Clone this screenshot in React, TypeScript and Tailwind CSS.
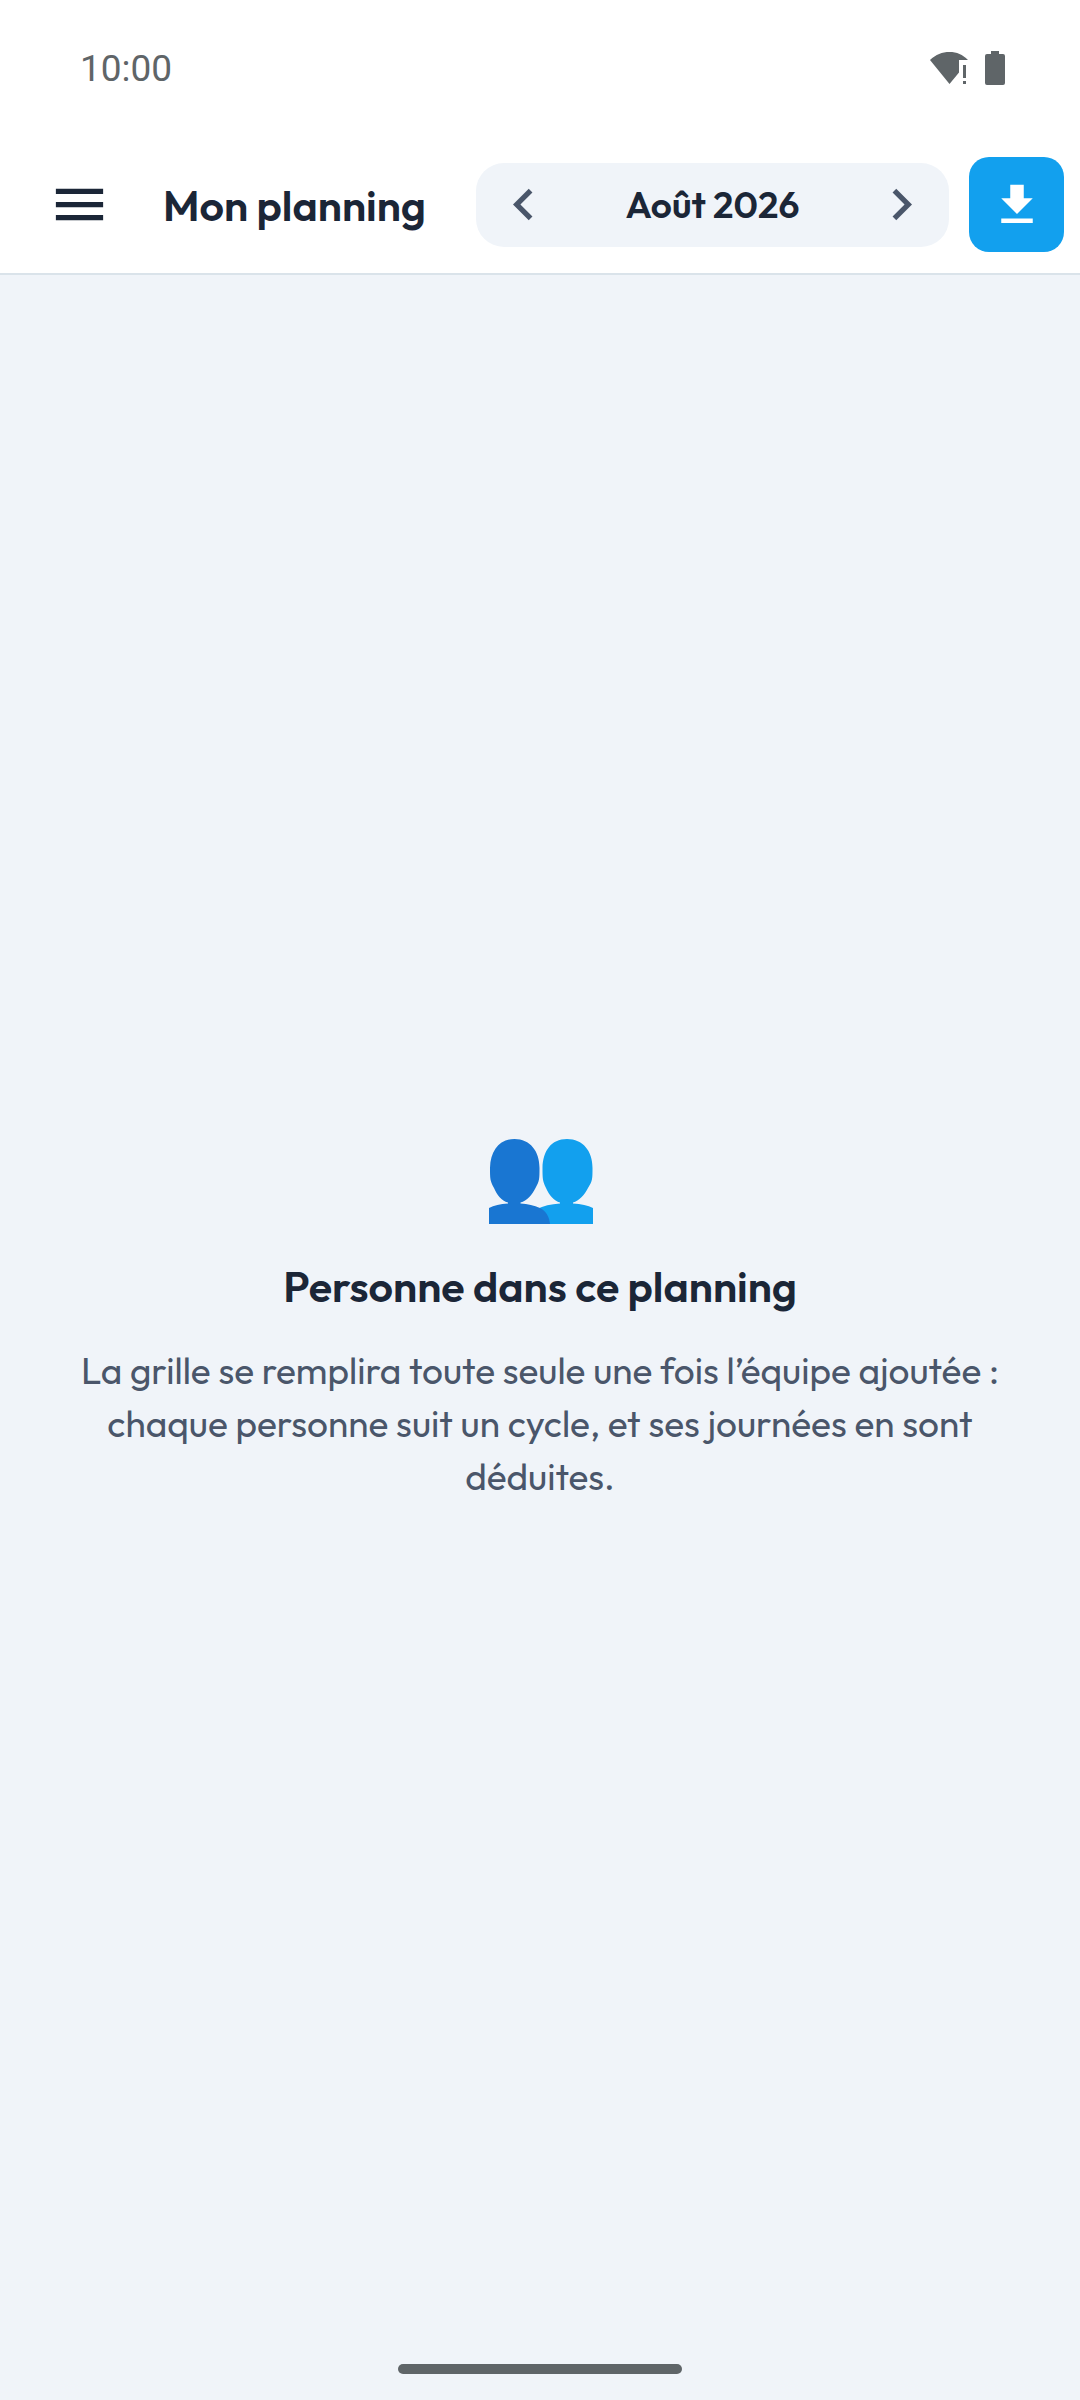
import React, { useState } from 'react';
import { MdChevronLeft, MdChevronRight, MdFileDownload, MdMenu } from 'react-icons/md';

const MONTHS = [
  'Janvier', 'Février', 'Mars', 'Avril', 'Mai', 'Juin',
  'Juillet', 'Août', 'Septembre', 'Octobre', 'Novembre', 'Décembre',
];

const StatusBar: React.FC = () => (
  <div className="flex h-34 items-center justify-between pl-20 pr-[74px] font-['Roboto',sans-serif] text-[#5f6568]">
    <span className="text-[37px] leading-none">10:00</span>
    <div className="flex items-center gap-[15px]">
      <svg width="40" height="36" viewBox="0 1 40 36" fill="currentColor" aria-hidden="true">
        <path d="M1 11C7 5.500 13 3 20.500 3S33.500 5.500 39 11H30V23.500L20.500 35Z" />
        <path d="M34 16h3v13h-3zM34 32h3v3h-3z" />
      </svg>
      <svg width="22" height="36" viewBox="0 1 22 36" fill="currentColor" aria-hidden="true">
        <path d="M7 2h8v3h4a2 2 0 0 1 2 2v27a2 2 0 0 1-2 2H3a2 2 0 0 1-2-2V7a2 2 0 0 1 2-2h4z" />
      </svg>
    </div>
  </div>
);

const PeopleIcon: React.FC = () => (
  <svg width="106" height="85" viewBox="-2 0 106 85" aria-hidden="true">
    <path
      fill="#12a0ee"
      d="M78 0C94 0 103.500 12 103.500 29C103.500 40 103.500 42 99 49C95.500 56 90 62 84 63.500V64.500C92 65 99 66.500 104 69V85H48V70C54 67 62 65 71 64.500V63.500C65 62 60 56 57 49C53.500 42 53.500 39 53.500 29C54 12 62 0 78 0Z"
    />
    <path
      fill="#1976d2"
      d="M25.500 0C41 0 50.500 12 50.500 29C50.500 40 50.500 42 46.500 49C43 56 38 62 31.500 63.500V64.500C39 65 45 66.500 51 69C57 72 60.500 78 61 85H0V69C5 66.500 11 65 19 64.500V63.500C12.500 62 8 56 5 49C1 42 1 39 1 29C1.500 12 10 0 25.500 0Z"
    />
  </svg>
);

export default function App() {
  // months counted from year 0 so that prev / next roll over the year
  const [month, setMonth] = useState(2026 * 12 + 7);
  const label = `${MONTHS[month % 12]} ${Math.floor(month / 12)}`;

  return (
    <div className="flex min-h-screen flex-col bg-[#f0f4f9] font-['Outfit','Lato',sans-serif] text-[#1b2637]">
      <header className="border-b-2 border-[#dae3ea] bg-white">
        <StatusBar />
        <div className="flex items-center py-[21px] pl-12 pr-4">
          <button type="button" aria-label="Menu" className="shrink-0">
            <MdMenu size={63} />
          </button>
          <h1 className="ml-13 whitespace-nowrap text-[43px] font-semibold leading-[52px]">Mon planning</h1>
          <div className="ml-[50px] flex h-21 flex-1 items-center justify-between rounded-[28px] bg-[#f0f4f9] px-4">
            <button
              type="button"
              aria-label="Mois précédent"
              className="text-[#4a566a]"
              onClick={() => setMonth(month - 1)}
            >
              <MdChevronLeft size={63} />
            </button>
            <span className="text-[37px] font-semibold leading-[52px]">{label}</span>
            <button
              type="button"
              aria-label="Mois suivant"
              className="text-[#4a566a]"
              onClick={() => setMonth(month + 1)}
            >
              <MdChevronRight size={63} />
            </button>
          </div>
          <button
            type="button"
            aria-label="Télécharger"
            className="ml-5 flex size-[95px] shrink-0 items-center justify-center rounded-[20px] bg-[#12a0ee] text-white"
          >
            <MdFileDownload size={54} />
          </button>
        </div>
      </header>

      <main className="flex flex-1 flex-col items-center justify-center px-16 pt-7 text-center">
        <PeopleIcon />
        <h2 className="mt-9 text-[43px] font-semibold leading-[52px]">Personne dans ce planning</h2>
        <p className="mt-8 text-[37px] leading-[53px] text-[#4a566a]">
          La grille se remplira toute seule une fois l’équipe ajoutée&nbsp;: chaque personne suit un cycle, et ses
          journées en sont déduites.
        </p>
      </main>

      <div className="flex h-[62px] items-center justify-center">
        <div className="h-[10px] w-71 rounded-full bg-[#5f6568]" />
      </div>
    </div>
  );
}
